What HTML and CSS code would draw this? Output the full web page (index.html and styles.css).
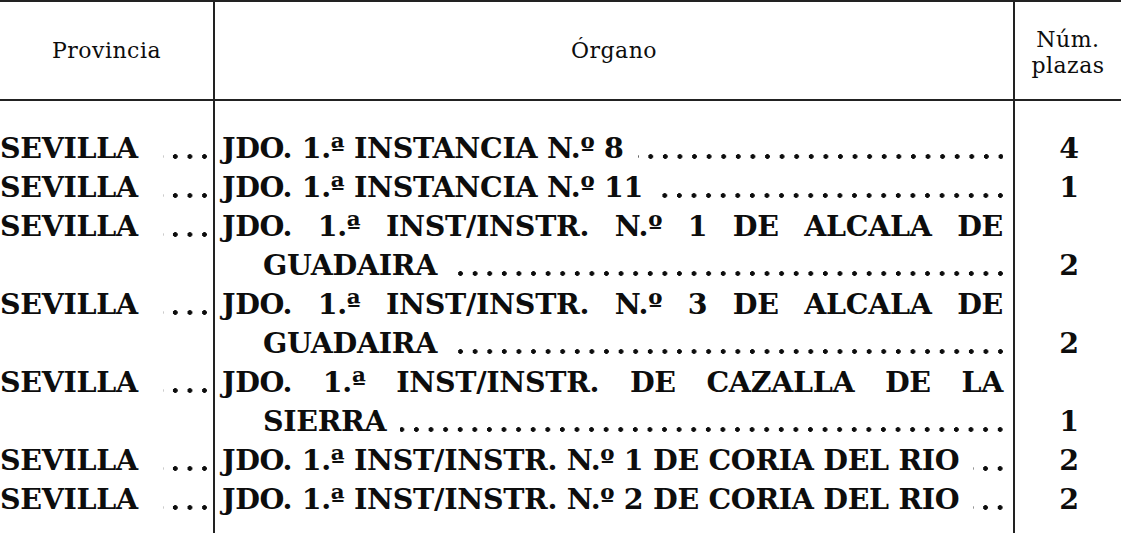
FILE: index.html
```html
<!DOCTYPE html>
<html lang="es">
<head>
<meta charset="utf-8">
<title>Plazas</title>
<link rel="stylesheet" href="styles.css">
</head>
<body>
<div class="tbl">
  <div class="h prov">Provincia</div>
  <div class="h org">Órgano</div>
  <div class="h num">Núm.<br>plazas</div>

  <div class="c prov first"><div class="pl"><span>SEVILLA</span><span class="dots3"></span></div></div>
  <div class="c org first"><div class="ln"><span>JDO. 1.ª INSTANCIA N.º 8</span><span class="leader"></span></div></div>
  <div class="c num first">4</div>

  <div class="c prov"><div class="pl"><span>SEVILLA</span><span class="dots3"></span></div></div>
  <div class="c org"><div class="ln"><span>JDO. 1.ª INSTANCIA N.º 11</span><span class="leader"></span></div></div>
  <div class="c num">1</div>

  <div class="c prov"><div class="pl"><span>SEVILLA</span><span class="dots3"></span></div></div>
  <div class="c org"><div class="jl">JDO. 1.ª INST/INSTR. N.º 1 DE ALCALA DE</div><div class="ln cont"><span>GUADAIRA</span><span class="leader"></span></div></div>
  <div class="c num">2</div>

  <div class="c prov"><div class="pl"><span>SEVILLA</span><span class="dots3"></span></div></div>
  <div class="c org"><div class="jl">JDO. 1.ª INST/INSTR. N.º 3 DE ALCALA DE</div><div class="ln cont"><span>GUADAIRA</span><span class="leader"></span></div></div>
  <div class="c num">2</div>

  <div class="c prov"><div class="pl"><span>SEVILLA</span><span class="dots3"></span></div></div>
  <div class="c org"><div class="jl">JDO. 1.ª INST/INSTR. DE CAZALLA DE LA</div><div class="ln cont"><span>SIERRA</span><span class="leader"></span></div></div>
  <div class="c num">1</div>

  <div class="c prov"><div class="pl"><span>SEVILLA</span><span class="dots3"></span></div></div>
  <div class="c org"><div class="ln"><span>JDO. 1.ª INST/INSTR. N.º 1 DE CORIA DEL RIO</span><span class="leader"></span></div></div>
  <div class="c num">2</div>

  <div class="c prov last"><div class="pl"><span>SEVILLA</span><span class="dots3"></span></div></div>
  <div class="c org last"><div class="ln"><span>JDO. 1.ª INST/INSTR. N.º 2 DE CORIA DEL RIO</span><span class="leader"></span></div></div>
  <div class="c num last">2</div>
</div>
</body>
</html>
```
FILE: styles.css
```css
html, body {
  margin: 0;
  padding: 0;
  background: #ffffff;
}

body {
  color: #111111;
  font-family: "DejaVu Serif", "Liberation Serif", serif;
}

.tbl {
  display: grid;
  grid-template-columns: 215px 800px 106px;
  width: 1121px;
}

.h {
  box-sizing: border-box;
  height: 101px;
  border-top: 2px solid #222222;
  border-bottom: 2px solid #222222;
  display: flex;
  align-items: center;
  justify-content: center;
  text-align: center;
  font-size: 22px;
  font-weight: normal;
  letter-spacing: 0.5px;
  line-height: 26px;
  color: #0d0d0d;
}

.h.num {
  padding-top: 4px;
}

.h.prov,
.h.org,
.c.prov,
.c.org {
  border-right: 2px solid #222222;
}

.c {
  box-sizing: border-box;
  font-size: 28.5px;
  font-weight: bold;
  letter-spacing: -0.3px;
  line-height: 39px;
  color: #0d0d0d;
}

.c.first {
  padding-top: 28px;
}

.c.last {
  padding-bottom: 14px;
}

.c.prov {
  padding-right: 6px;
}

.c.org {
  padding-left: 7px;
  padding-right: 10px;
}

.c.num {
  display: flex;
  align-items: flex-end;
  justify-content: center;
  padding-left: 2px;
}

.pl,
.ln {
  display: flex;
  white-space: nowrap;
}

.pl {
  justify-content: space-between;
}

.jl {
  white-space: nowrap;
  text-align: justify;
  text-align-last: justify;
}

.ln.cont {
  padding-left: 41px;
}

.leader,
.dots3 {
  align-self: flex-end;
  height: 5px;
  margin-bottom: 9.2px;
  background-image: radial-gradient(circle 2.5px at calc(100% - 2.5px) 2.5px, #0d0d0d 85%, transparent 100%);
  background-size: 14.6px 5px;
  background-position: right bottom;
  background-repeat: repeat-x;
}

.leader {
  flex: 1;
  margin-left: 14px;
}

.dots3 {
  width: 44px;
}
```
